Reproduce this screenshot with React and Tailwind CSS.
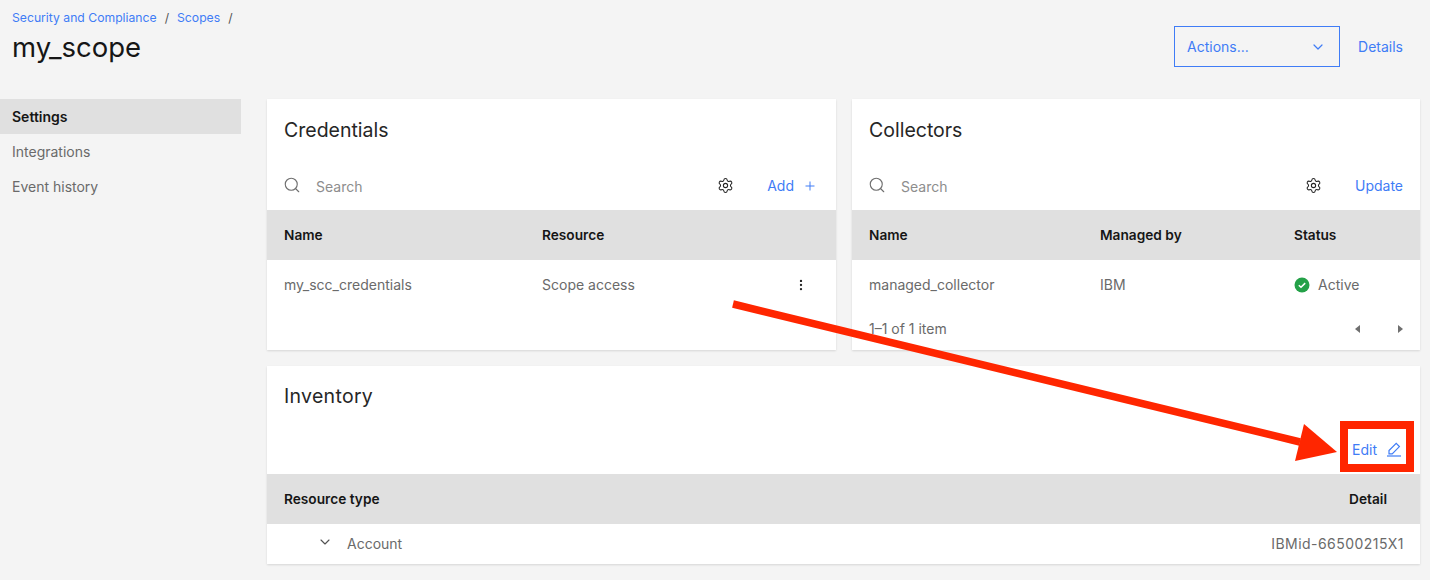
import React from 'react';
import { ChevronDown, Search, Settings, Plus, EllipsisVertical } from 'lucide-react';

const font = "font-['Inter','Noto_Sans',sans-serif]";

const Toolbar = ({ action }) => (
  <div className="h-[48px] flex items-center pl-[16px] pr-[17px]">
    <Search size={18} strokeWidth={1.5} className="text-[#6f6f6f] -mt-[2px]" />
    <span className="ml-[15px] text-[14px] text-[#8d8d8d]">Search</span>
    <div className="ml-auto flex items-center -mt-[1px]">{action}</div>
  </div>
);

const Th = ({ className = '', children }) => (
  <div className={`text-[13.7px] leading-[20px] font-semibold text-[#161616] ${className}`}>{children}</div>
);

const Td = ({ className = '', children }) => (
  <div className={`pb-[1px] text-[14px] text-[#6a6a6a] ${className}`}>{children}</div>
);

export default function App() {
  return (
    <div className={`relative w-[1430px] h-[580px] overflow-hidden bg-[#f4f4f4] ${font}`}>
      <header className="h-[99px] flex justify-between pl-[12px] pr-[27px]">
        <div className="pt-[10px]">
          <div className="flex items-center text-[12.2px] leading-[16px] text-[#3f7cf6]">
            <span>Security and Compliance</span>
            <span className="mx-[8px] text-[#525252]">/</span>
            <span>Scopes</span>
            <span className="mx-[8px] text-[#525252]">/</span>
          </div>
          <h1 className="mt-[3px] text-[27.5px] leading-[36px] text-[#161616]">my_scope</h1>
        </div>
        <div className="pt-[26px] flex items-start">
          <div className="w-[166px] h-[41px] border border-[#3f7cf6] flex items-center justify-between pl-[12px] pr-[13px] text-[14px] text-[#3f7cf6]">
            <span>Actions...</span>
            <ChevronDown size={16} strokeWidth={1.8} />
          </div>
          <span className="ml-[18px] mt-[12px] text-[14px] leading-[18px] text-[#3f7cf6]">Details</span>
        </div>
      </header>

      <div className="flex">
        <nav className="w-[241px] shrink-0 text-[14px]">
          <div className="h-[35px] bg-[#e0e0e0] flex items-center pl-[12px] font-semibold text-[#161616]">Settings</div>
          <div className="h-[35px] flex items-center pl-[12px] text-[#6a6a6a]">Integrations</div>
          <div className="h-[35px] flex items-center pl-[12px] text-[#6a6a6a]">Event history</div>
        </nav>

        <main className="ml-[26px] w-[1153px] grid grid-cols-[569px_568px] gap-x-[16px] gap-y-[16px]">
          <section className="bg-white h-[251px] shadow-[0_1px_2px_rgba(0,0,0,0.12)]">
            <h2 className="h-[63px] pl-[17px] pt-[17px] text-[19.5px] leading-[28px] text-[#262626]">Credentials</h2>
            <Toolbar
              action={
                <>
                  <Settings size={17} strokeWidth={1.5} className="text-[#262626]" />
                  <span className="ml-[33px] text-[14px] text-[#3f7cf6]">Add</span>
                  <Plus size={14} strokeWidth={1.7} className="ml-[9px] mr-[2px] text-[#3f7cf6]" />
                </>
              }
            />
            <div className="h-[50px] bg-[#e0e0e0] flex items-center pl-[17px]">
              <Th className="w-[258px]">Name</Th>
              <Th>Resource</Th>
            </div>
            <div className="h-[50px] flex items-center pl-[17px] pr-[28px]">
              <Td className="w-[258px]">my_scc_credentials</Td>
              <Td className="text-[13.4px]">Scope access</Td>
              <EllipsisVertical size={14} strokeWidth={2} className="ml-auto text-[#262626]" />
            </div>
          </section>

          <section className="bg-white h-[251px] shadow-[0_1px_2px_rgba(0,0,0,0.12)]">
            <h2 className="h-[63px] pl-[17px] pt-[17px] text-[19.5px] leading-[28px] text-[#262626]">Collectors</h2>
            <Toolbar
              action={
                <>
                  <Settings size={17} strokeWidth={1.5} className="text-[#262626]" />
                  <span className="ml-[33px] text-[14px] text-[#3f7cf6]">Update</span>
                </>
              }
            />
            <div className="h-[50px] bg-[#e0e0e0] flex items-center pl-[17px]">
              <Th className="w-[231px]">Name</Th>
              <Th className="w-[194px]">Managed by</Th>
              <Th>Status</Th>
            </div>
            <div className="h-[50px] flex items-center pl-[17px]">
              <Td className="w-[231px]">managed_collector</Td>
              <Td className="w-[194px]">IBM</Td>
              <div className="flex items-center">
                <svg width="16" height="16" viewBox="0 0 16 16">
                  <circle cx="8" cy="8" r="7.5" fill="#24a148" />
                  <path d="M4.8 8.2l2.2 2.1 4.2-4.2" fill="none" stroke="#fff" strokeWidth="1.5" />
                </svg>
                <Td className="ml-[8px]">Active</Td>
              </div>
            </div>
            <div className="h-[40px] flex items-center pb-[2px] pl-[17px] pr-[17px]">
              <Td>1–1 of 1 item</Td>
              <svg width="6" height="8" viewBox="0 0 6 8" className="ml-auto">
                <path d="M5 0v8L0 4z" fill="#6f6f6f" />
              </svg>
              <svg width="6" height="8" viewBox="0 0 6 8" className="ml-[36px]">
                <path d="M1 0v8l5-4z" fill="#6f6f6f" />
              </svg>
            </div>
          </section>

          <section className="col-span-2 bg-white h-[198px] shadow-[0_1px_2px_rgba(0,0,0,0.12)]">
            <h2 className="h-[60px] pl-[17px] pt-[16px] text-[19.5px] leading-[28px] tracking-[0.3px] text-[#262626]">Inventory</h2>
            <div className="h-[48px] flex items-center justify-end pb-[2px] pr-[18px] text-[#3f7cf6]">
              <span className="text-[14px]">Edit</span>
              <svg width="16" height="16" viewBox="0 0 16 16" fill="none" stroke="currentColor" strokeWidth="1.2" className="ml-[9px]">
                <path d="M1 15h14" />
                <path d="M3 12.8V9.6L10.2 2.4l3.2 3.2-7.2 7.2z" />
              </svg>
            </div>
            <div className="h-[50px] bg-[#e0e0e0] flex items-center justify-between pl-[17px] pr-[33px]">
              <Th>Resource type</Th>
              <Th>Detail</Th>
            </div>
            <div className="h-[40px] flex items-center pl-[50px] pr-[16px]">
              <ChevronDown size={16} strokeWidth={1.7} className="text-[#525252] -mt-[5px]" />
              <Td className="ml-[14px]">Account</Td>
              <Td className="ml-auto tracking-[0.45px]">IBMid-66500215X1</Td>
            </div>
          </section>
        </main>
      </div>

      {/* red annotation drawn over the screenshot */}
      <div className="absolute left-[1340px] top-[421px] w-[74px] h-[51px] border-[8px] border-[#ff2600]" />
      <svg className="absolute left-0 top-0" width="1430" height="580" viewBox="0 0 1430 580">
        <path d="M733 304L1300 442" stroke="#ff2600" strokeWidth="7.5" fill="none" />
        <path d="M1304 424L1337 452L1295 461z" fill="#ff2600" />
      </svg>
    </div>
  );
}
